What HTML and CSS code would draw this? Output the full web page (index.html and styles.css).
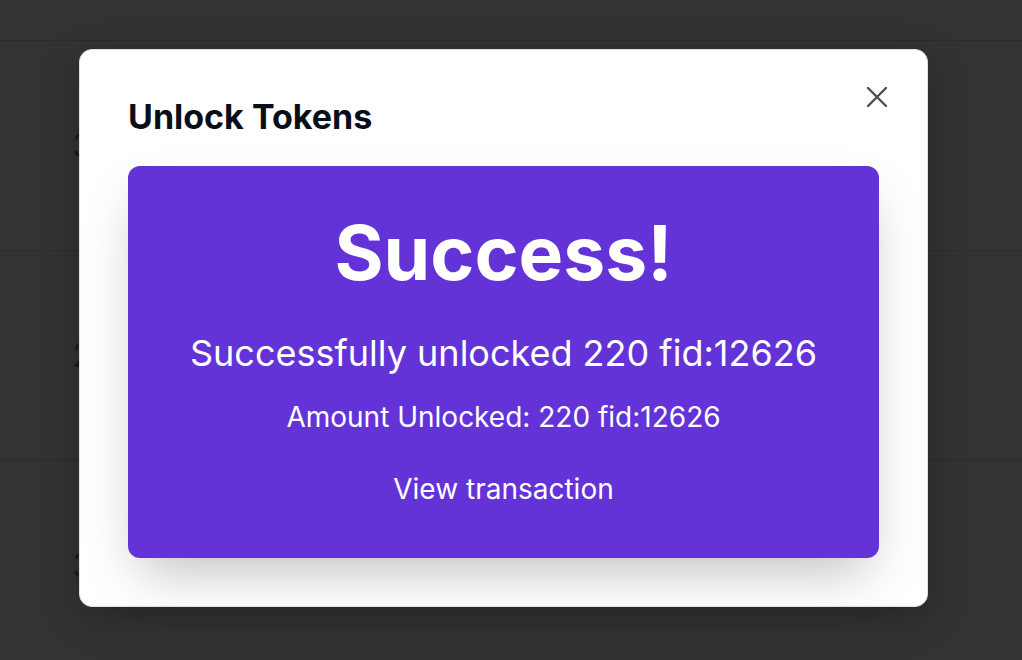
FILE: index.html
```html
<!DOCTYPE html>
<html lang="en">
<head>
<meta charset="utf-8">
<title>Unlock Tokens</title>
<link rel="stylesheet" href="styles.css">
</head>
<body>
<div class="page">
  <div class="page-head"></div>
  <div class="row"><span class="cell">3</span></div>
  <div class="row"><span class="cell">2</span></div>
  <div class="row"><span class="cell">3</span></div>
</div>
<div class="modal" role="dialog" aria-labelledby="modal-title">
  <button class="close" aria-label="Close">
    <svg width="20" height="20" viewBox="0 0 20 20" fill="none" stroke="currentColor" stroke-width="2.4" stroke-linecap="round"><path d="M1 1L19 19M19 1L1 19"/></svg>
  </button>
  <h1 class="title" id="modal-title">Unlock Tokens</h1>
  <div class="card">
    <h2 class="headline">Success!</h2>
    <p class="message">Successfully unlocked 220 fid:12626</p>
    <p class="amount">Amount Unlocked: 220 fid:12626</p>
    <a class="tx-link" href="#">View transaction</a>
  </div>
</div>
</body>
</html>
```
FILE: styles.css
```css
* { box-sizing: border-box; }
html, body { margin: 0; padding: 0; }
body {
  background: #333333;
  font-family: Inter, "Noto Sans", sans-serif;
  width: 1022px;
  height: 660px;
  overflow: hidden;
  position: relative;
}
.page { display: flex; flex-direction: column; }
.page-head { height: 41px; border-bottom: 1px solid #2c2c2c; }
.row {
  height: 210px;
  border-bottom: 1px solid #2c2c2c;
  display: flex;
  align-items: center;
  padding-left: 72px;
}
.cell { font-size: 32px; color: #1c1c1c; line-height: 1; }
.modal {
  position: absolute;
  left: 79px;
  top: 49px;
  width: 849px;
  background: #ffffff;
  border: 1px solid #dde2ea;
  border-radius: 13px;
  padding: 47px 48px 48px;
  box-shadow: 0 10px 40px rgba(0,0,0,0.25);
}
.close {
  position: absolute;
  top: 37px;
  right: 40px;
  background: none;
  border: 0;
  padding: 0;
  width: 20px;
  height: 20px;
  color: #4a4f58;
  display: flex;
}
.title {
  margin: 0;
  font-size: 34px;
  line-height: 40px;
  font-weight: 700;
  color: #0a0e1a;
}
.card {
  margin-top: 29px;
  background: #6433d8;
  border-radius: 12px;
  padding: 49px 24px 51px;
  display: flex;
  flex-direction: column;
  align-items: center;
  text-align: center;
  color: #ffffff;
  box-shadow: 0 25px 50px -12px rgba(0,0,0,0.25);
}
.headline {
  margin: 0;
  font-size: 75px;
  line-height: 75px;
  font-weight: 700;
}
.message {
  margin: 43px 0 0;
  font-size: 36px;
  line-height: 40px;
}
.amount {
  margin: 26px 0 0;
  font-size: 28px;
  line-height: 36px;
}
.tx-link {
  margin-top: 36px;
  font-size: 28px;
  line-height: 36px;
  color: #ffffff;
  text-decoration: none;
}
```
